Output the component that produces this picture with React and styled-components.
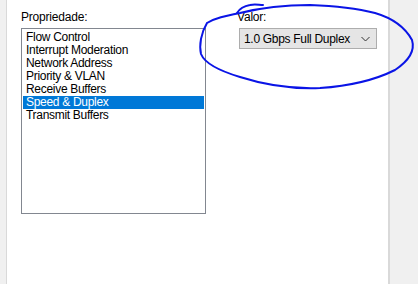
import React from 'react'
import styled, { createGlobalStyle } from 'styled-components'

const GlobalStyle = createGlobalStyle`
  html, body {
    margin: 0;
    padding: 0;
    background: #f0f0f0;
  }
  body {
    font-family: 'Liberation Sans', Arial, sans-serif;
    font-size: 12px;
    color: #000;
  }
`

const Page = styled.div`
  display: flex;
  width: 418px;
  height: 284px;
  background: #f0f0f0;
  position: relative;
  overflow: hidden;
`

const Panel = styled.div`
  margin-left: 6px;
  width: 384px;
  height: 100%;
  background: #fff;
  border-left: 1px solid #d9d9d9;
  border-right: 2px solid #d9d9d9;
  display: flex;
  gap: 31px;
  padding: 10px 0 0 14px;
  box-sizing: border-box;
`

const Column = styled.div`
  display: flex;
  flex-direction: column;
  gap: 4px;
  width: ${({ width }) => width}px;
`

const Label = styled.div`
  height: 14px;
  line-height: 14px;
  color: #000;
  letter-spacing: -0.2px;
`

const ListBox = styled.ul`
  list-style: none;
  margin: 0;
  padding: 2px 1px 1px;
  width: 185px;
  height: 186px;
  box-sizing: border-box;
  border: 1px solid #828790;
`

const Item = styled.li`
  height: 13px;
  line-height: 13px;
  padding-left: 3px;
  letter-spacing: -0.3px;
  background: ${({ selected }) => (selected ? '#0078d7' : 'transparent')};
  color: ${({ selected }) => (selected ? '#fff' : '#000')};
`

const Combo = styled.div`
  display: flex;
  align-items: center;
  justify-content: space-between;
  margin-left: 2px;
  width: 138px;
  height: 21px;
  box-sizing: border-box;
  border: 1px solid #adadad;
  background: #e5e5e5;
  padding: 0 6px 0 4px;
  letter-spacing: -0.3px;
`

const Scribble = styled.svg`
  position: absolute;
  left: 0;
  top: 0;
  pointer-events: none;
`

const items = [
  'Flow Control',
  'Interrupt Moderation',
  'Network Address',
  'Priority & VLAN',
  'Receive Buffers',
  'Speed & Duplex',
  'Transmit Buffers',
]

export default function App() {
  return (
    <Page>
      <GlobalStyle />
      <Panel>
        <Column width={185}>
          <Label>Propriedade:</Label>
          <ListBox>
            {items.map((it) => (
              <Item key={it} selected={it === 'Speed & Duplex'}>
                {it}
              </Item>
            ))}
          </ListBox>
        </Column>
        <Column width={140}>
          <Label>Valor:</Label>
          <Combo>
            <span>1.0 Gbps Full Duplex</span>
            <svg width="9" height="6" viewBox="0 0 9 6">
              <path d="M0.5 1 L4.5 5 L8.5 1" fill="none" stroke="#333" strokeWidth="1" />
            </svg>
          </Combo>
        </Column>
      </Panel>
      <Scribble width="418" height="284" viewBox="0 0 418 284">
        <path
          d="M237 13 C240 8 244 6 250 5 C255 4 259 5 263 5"
          fill="none"
          stroke="#0a14e6"
          strokeWidth="2"
          strokeLinecap="round"
        />
        <path
          d="M207 23 C215 18 225 16 240 13 C260 8 285 5 310 5 C335 6 355 8 375 13 C392 18 405 27 412 40 C415 50 410 60 395 70 C375 80 350 86 320 88 C295 89 265 85 240 77 C220 71 205 64 201 54 C199 45 201 33 207 23"
          fill="none"
          stroke="#0a14e6"
          strokeWidth="2"
          strokeLinecap="round"
        />
      </Scribble>
    </Page>
  )
}
